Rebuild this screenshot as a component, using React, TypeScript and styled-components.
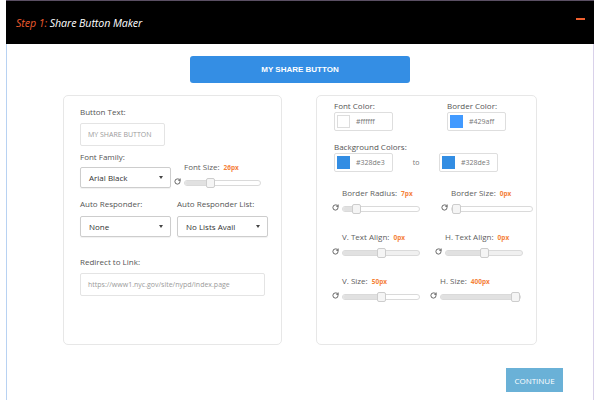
import React from 'react';
import styled, { createGlobalStyle } from 'styled-components';
import { RotateCw } from 'lucide-react';

const GlobalStyle = createGlobalStyle`
  html, body {
    margin: 0;
    padding: 0;
    background: #ffffff;
  }
  body {
    font-family: 'Open Sans', 'DejaVu Sans', sans-serif;
  }
`;

const Page = styled.div`
  margin-left: 6px;
  width: 588px;
  min-height: 400px;
  display: flex;
  flex-direction: column;
`;

const Header = styled.div`
  height: 44px;
  box-sizing: border-box;
  background: #000000;
  border-top: 1px solid #5a4f63;
  display: flex;
  align-items: center;
  justify-content: space-between;
  padding: 0 9px 0 10px;
`;

const Title = styled.div`
  font-size: 10.7px;
  font-style: italic;
  color: #ffffff;
  letter-spacing: -0.1px;
`;

const Step = styled.span`
  color: #ec5b2f;
`;

const Collapse = styled.span`
  width: 9px;
  height: 1.5px;
  background: #f0602f;
  margin-top: -7px;
`;

const Body = styled.div`
  flex: 1;
  border-left: 1px solid #b8d2f2;
  border-right: 1px solid #d9d1ea;
  padding-top: 12px;
  display: flex;
  flex-direction: column;
`;

const PreviewButton = styled.div`
  align-self: center;
  width: 220px;
  height: 27px;
  border-radius: 3px;
  background: #348ee4;
  color: #ffffff;
  font-family: 'Liberation Sans', Arial, sans-serif;
  font-weight: bold;
  font-size: 8px;
  display: flex;
  align-items: center;
  justify-content: center;
`;

const Panels = styled.div`
  margin-top: 12px;
  display: flex;
  justify-content: center;
  gap: 34px;
`;

const Panel = styled.div<{ $w: number; $pad: string }>`
  width: ${p => p.$w}px;
  height: 250px;
  box-sizing: border-box;
  border: 1px solid #e7e7e7;
  border-radius: 5px;
  padding: ${p => p.$pad};
  display: flex;
  flex-direction: column;
`;

const Field = styled.div<{ $top?: number }>`
  margin-top: ${p => p.$top ?? 0}px;
  display: flex;
  flex-direction: column;
  align-items: flex-start;
`;

const Label = styled.div<{ $gap?: number }>`
  font-size: 8px;
  line-height: 12px;
  color: #555555;
  margin-bottom: ${p => p.$gap ?? 5}px;
  white-space: nowrap;
`;

const TextBox = styled.div<{ $w: number }>`
  width: ${p => p.$w}px;
  height: 23px;
  box-sizing: border-box;
  border: 1px solid #e4e4e4;
  border-radius: 2px;
  padding-left: 7px;
  display: flex;
  align-items: center;
  font-size: 7px;
  color: #9a9a9a;
  white-space: nowrap;
`;

const Select = styled.div`
  width: 91px;
  height: 21px;
  box-sizing: border-box;
  border: 1px solid #cdcdcd;
  border-radius: 2px;
  box-shadow: 0 1px 1px rgba(0, 0, 0, 0.06);
  padding: 0 7px 0 8px;
  display: flex;
  align-items: center;
  justify-content: space-between;
  font-size: 8px;
  color: #333333;
`;

const Caret = styled.span`
  width: 0;
  height: 0;
  border-left: 2px solid transparent;
  border-right: 2px solid transparent;
  border-top: 3px solid #444444;
`;

const Row = styled.div<{ $gap: number; $align?: string }>`
  display: flex;
  gap: ${p => p.$gap}px;
  align-items: ${p => p.$align ?? 'flex-start'};
`;

const SliderGroup = styled.div<{ $indent?: number; $lift?: number }>`
  display: flex;
  align-items: flex-end;
  gap: 3px;
  margin-left: ${p => p.$indent ?? 0}px;
  margin-top: ${p => -(p.$lift ?? 0)}px;
`;

const ResetIcon = styled(RotateCw)`
  color: #555555;
  margin-bottom: 1px;
  flex-shrink: 0;
`;

const SliderBody = styled.div`
  display: flex;
  flex-direction: column;
`;

const SliderLabel = styled.div`
  font-size: 8px;
  line-height: 12px;
  color: #5e5e5e;
  margin-bottom: 6px;
  white-space: nowrap;
`;

const Value = styled.span`
  margin-left: 4px;
  font-size: 6.5px;
  font-weight: bold;
  color: #f5823b;
`;

const Track = styled.div<{ $w: number; $muted?: boolean }>`
  position: relative;
  width: ${p => p.$w}px;
  height: 6px;
  box-sizing: border-box;
  border: 1px solid #dadada;
  border-radius: 4px;
  background: ${p => (p.$muted ? '#f0f0f0' : '#ffffff')};
`;

const Fill = styled.div`
  position: absolute;
  left: 0;
  top: 0;
  bottom: 0;
  background: #e1e1e1;
  border-radius: 3px 0 0 3px;
`;

const Thumb = styled.div`
  position: absolute;
  top: -3px;
  width: 9px;
  height: 10px;
  box-sizing: border-box;
  border: 1px solid #cdcdcd;
  border-radius: 2px;
  background: #f5f5f5;
`;

const ColorGrid = styled.div`
  display: grid;
  grid-template-columns: 113px auto;
`;

const ColorBox = styled.div<{ $w?: number }>`
  width: ${p => p.$w ?? 59}px;
  height: 19px;
  box-sizing: border-box;
  border: 1px solid #dedede;
  border-radius: 2px;
  padding-left: 2px;
  display: flex;
  align-items: center;
  gap: 6px;
  font-size: 7px;
  color: #777777;
`;

const Swatch = styled.span<{ $color: string }>`
  width: 13px;
  height: 13px;
  box-sizing: border-box;
  background: ${p => p.$color};
  border: 1px solid ${p => (p.$color === '#ffffff' ? '#dddddd' : p.$color)};
`;

const To = styled.span`
  width: 46px;
  text-align: center;
  font-size: 7px;
  color: #777777;
`;

const SliderGrid = styled.div`
  margin-top: 15px;
  margin-left: -2px;
  display: flex;
  flex-direction: column;
  gap: 19px;
`;

const SliderPair = styled.div`
  display: grid;
  grid-template-columns: 98px auto;
`;

const Footer = styled.div`
  display: flex;
  justify-content: flex-end;
  padding: 23px 30px 0 0;
`;

const ContinueButton = styled.div`
  width: 57px;
  height: 24px;
  background: #6ab1d7;
  color: #ffffff;
  font-size: 8px;
  display: flex;
  align-items: center;
  justify-content: center;
`;

type SliderProps = {
  label: string;
  value: string;
  width: number;
  pct: number;
  indent?: number;
  lift?: number;
  muted?: boolean;
};

const Slider = ({ label, value, width, pct, indent, lift, muted }: SliderProps) => (
  <SliderGroup $indent={indent} $lift={lift}>
    <ResetIcon size={7} strokeWidth={3} />
    <SliderBody>
      <SliderLabel>
        {label}
        <Value>{value}</Value>
      </SliderLabel>
      <Track $w={width} $muted={muted}>
        <Fill style={{ width: `calc((100% - 9px) * ${pct} + 4px)` }} />
        <Thumb style={{ left: `calc((100% - 9px) * ${pct})` }} />
      </Track>
    </SliderBody>
  </SliderGroup>
);

const ColorField = ({ color, w }: { color: string; w?: number }) => (
  <ColorBox $w={w}>
    <Swatch $color={color} />
    {color}
  </ColorBox>
);

const sliderRows: [SliderProps, SliderProps][] = [
  [
    { label: 'Border Radius:', value: '7px', width: 78, pct: 0.13 },
    { label: 'Border Size:', value: '0px', width: 82, pct: 0, indent: 11 },
  ],
  [
    { label: 'V. Text Align:', value: '0px', width: 78, pct: 0.5, muted: true },
    { label: 'H. Text Align:', value: '0px', width: 78, pct: 0.5, indent: 5, muted: true },
  ],
  [
    { label: 'V. Size:', value: '50px', width: 78, pct: 0.5 },
    { label: 'H. Size:', value: '400px', width: 81, pct: 1, muted: true },
  ],
];

export default function App() {
  return (
    <>
      <GlobalStyle />
      <Page>
        <Header>
          <Title>
            <Step>Step 1:</Step> Share Button Maker
          </Title>
          <Collapse />
        </Header>
        <Body>
          <PreviewButton>MY SHARE BUTTON</PreviewButton>
          <Panels>
            <Panel $w={219} $pad="10px 16px">
              <Field>
                <Label>Button Text:</Label>
                <TextBox $w={85}>MY SHARE BUTTON</TextBox>
              </Field>
              <Field $top={5}>
                <Label $gap={4}>Font Family:</Label>
                <Row $gap={3}>
                  <Select>
                    Arial Black
                    <Caret />
                  </Select>
                  <Slider label="Font Size:" value="26px" width={77} pct={0.32} lift={6} />
                </Row>
              </Field>
              <Row $gap={6}>
                <Field $top={10}>
                  <Label $gap={6}>Auto Responder:</Label>
                  <Select>
                    None
                    <Caret />
                  </Select>
                </Field>
                <Field $top={10}>
                  <Label $gap={6}>Auto Responder List:</Label>
                  <Select>
                    No Lists Avail
                    <Caret />
                  </Select>
                </Field>
              </Row>
              <Field $top={19}>
                <Label>Redirect to Link:</Label>
                <TextBox $w={185}>https://www1.nyc.gov/site/nypd/index.page</TextBox>
              </Field>
            </Panel>
            <Panel $w={221} $pad="4px 17px">
              <ColorGrid>
                <Field>
                  <Label $gap={0}>Font Color:</Label>
                  <ColorField color="#ffffff" />
                </Field>
                <Field>
                  <Label $gap={0}>Border Color:</Label>
                  <ColorField color="#429aff" />
                </Field>
              </ColorGrid>
              <Field $top={10}>
                <Label $gap={0}>Background Colors:</Label>
                <Row $gap={0} $align="center">
                  <ColorField color="#328de3" />
                  <To>to</To>
                  <ColorField color="#328de3" />
                </Row>
              </Field>
              <SliderGrid>
                {sliderRows.map(([a, b]) => (
                  <SliderPair key={a.label}>
                    <Slider {...a} />
                    <Slider {...b} />
                  </SliderPair>
                ))}
              </SliderGrid>
            </Panel>
          </Panels>
          <Footer>
            <ContinueButton>CONTINUE</ContinueButton>
          </Footer>
        </Body>
      </Page>
    </>
  );
}
